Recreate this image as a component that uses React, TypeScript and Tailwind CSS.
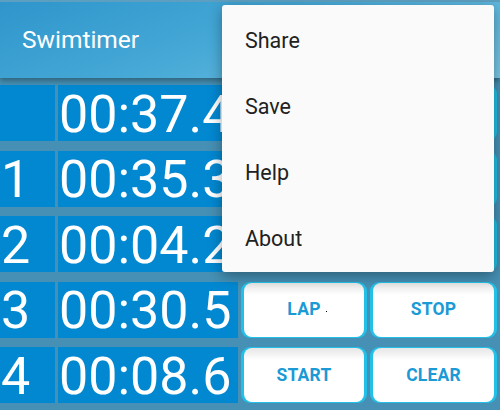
import React from "react";

const rows = [
  { label: "", time: "00:37.4", b1: "LAP", b2: "STOP" },
  { label: "1", time: "00:35.3", b1: "LAP", b2: "STOP" },
  { label: "2", time: "00:04.2", b1: "LAP", b2: "STOP" },
  { label: "3", time: "00:30.5", b1: "LAP", b2: "STOP" },
  { label: "4", time: "00:08.6", b1: "START", b2: "CLEAR" },
];

function Btn({ text, dot }: { text: string; dot?: boolean }) {
  return (
    <div className="h-full rounded-[9px] bg-[#22c0e6] px-[3px] py-[1px]">
      <div className="relative flex h-full items-center justify-center rounded-[8px] bg-[linear-gradient(to_bottom,#e6e6e6_0px,#ffffff_12px,#ffffff_100%)] text-[17.5px] font-bold tracking-[0.2px] text-[#1b9ad6]">
        {text}
        {dot && <span className="absolute left-[82px] top-[28px] h-[1px] w-[1px] bg-black" />}
      </div>
    </div>
  );
}

export default function App() {
  return (
    <div
      className="relative h-[410px] w-[500px] overflow-hidden bg-[#4590b4]"
      style={{ fontFamily: "Roboto, 'Noto Sans', sans-serif" }}
    >
      <div className="relative z-10 flex h-[78px] items-center border-t-2 border-[#5d9fc0] bg-[linear-gradient(160deg,#2f95cb_0%,#45a8d6_45%,#7ac6e4_100%)] pl-[22px] shadow-[0_3px_5px_rgba(0,0,0,0.3)]">
        <span className="text-[24.5px] text-white">Swimtimer</span>
      </div>
      <div className="grid grid-cols-[55px_180px_126px_127px] gap-x-[3px] gap-y-[9.5px] pt-[7px] auto-rows-[56px]">
        {rows.map((r, i) => (
          <React.Fragment key={i}>
            <div className="flex items-center overflow-hidden bg-[#0288d1] pl-[1px] pt-[3px] text-[52px] leading-none text-white">
              {r.label}
            </div>
            <div className="flex items-center overflow-hidden whitespace-nowrap bg-[#0288d1] pl-[1px] pt-[3px] text-[52px] leading-none text-white">
              {r.time}
            </div>
            <Btn text={r.b1} dot={i === 3} />
            <Btn text={r.b2} />
          </React.Fragment>
        ))}
      </div>
      <div className="absolute left-[222px] top-[5px] z-20 flex h-[267px] w-[272px] flex-col rounded-[3px] bg-[#fafafa] pt-[3px] shadow-[0_4px_14px_rgba(0,0,0,0.35)]">
        {["Share", "Save", "Help", "About"].map((t) => (
          <div key={t} className="flex h-[66.5px] items-center pl-[23px] text-[21.5px] text-[#212121]">
            {t}
          </div>
        ))}
      </div>
    </div>
  );
}
